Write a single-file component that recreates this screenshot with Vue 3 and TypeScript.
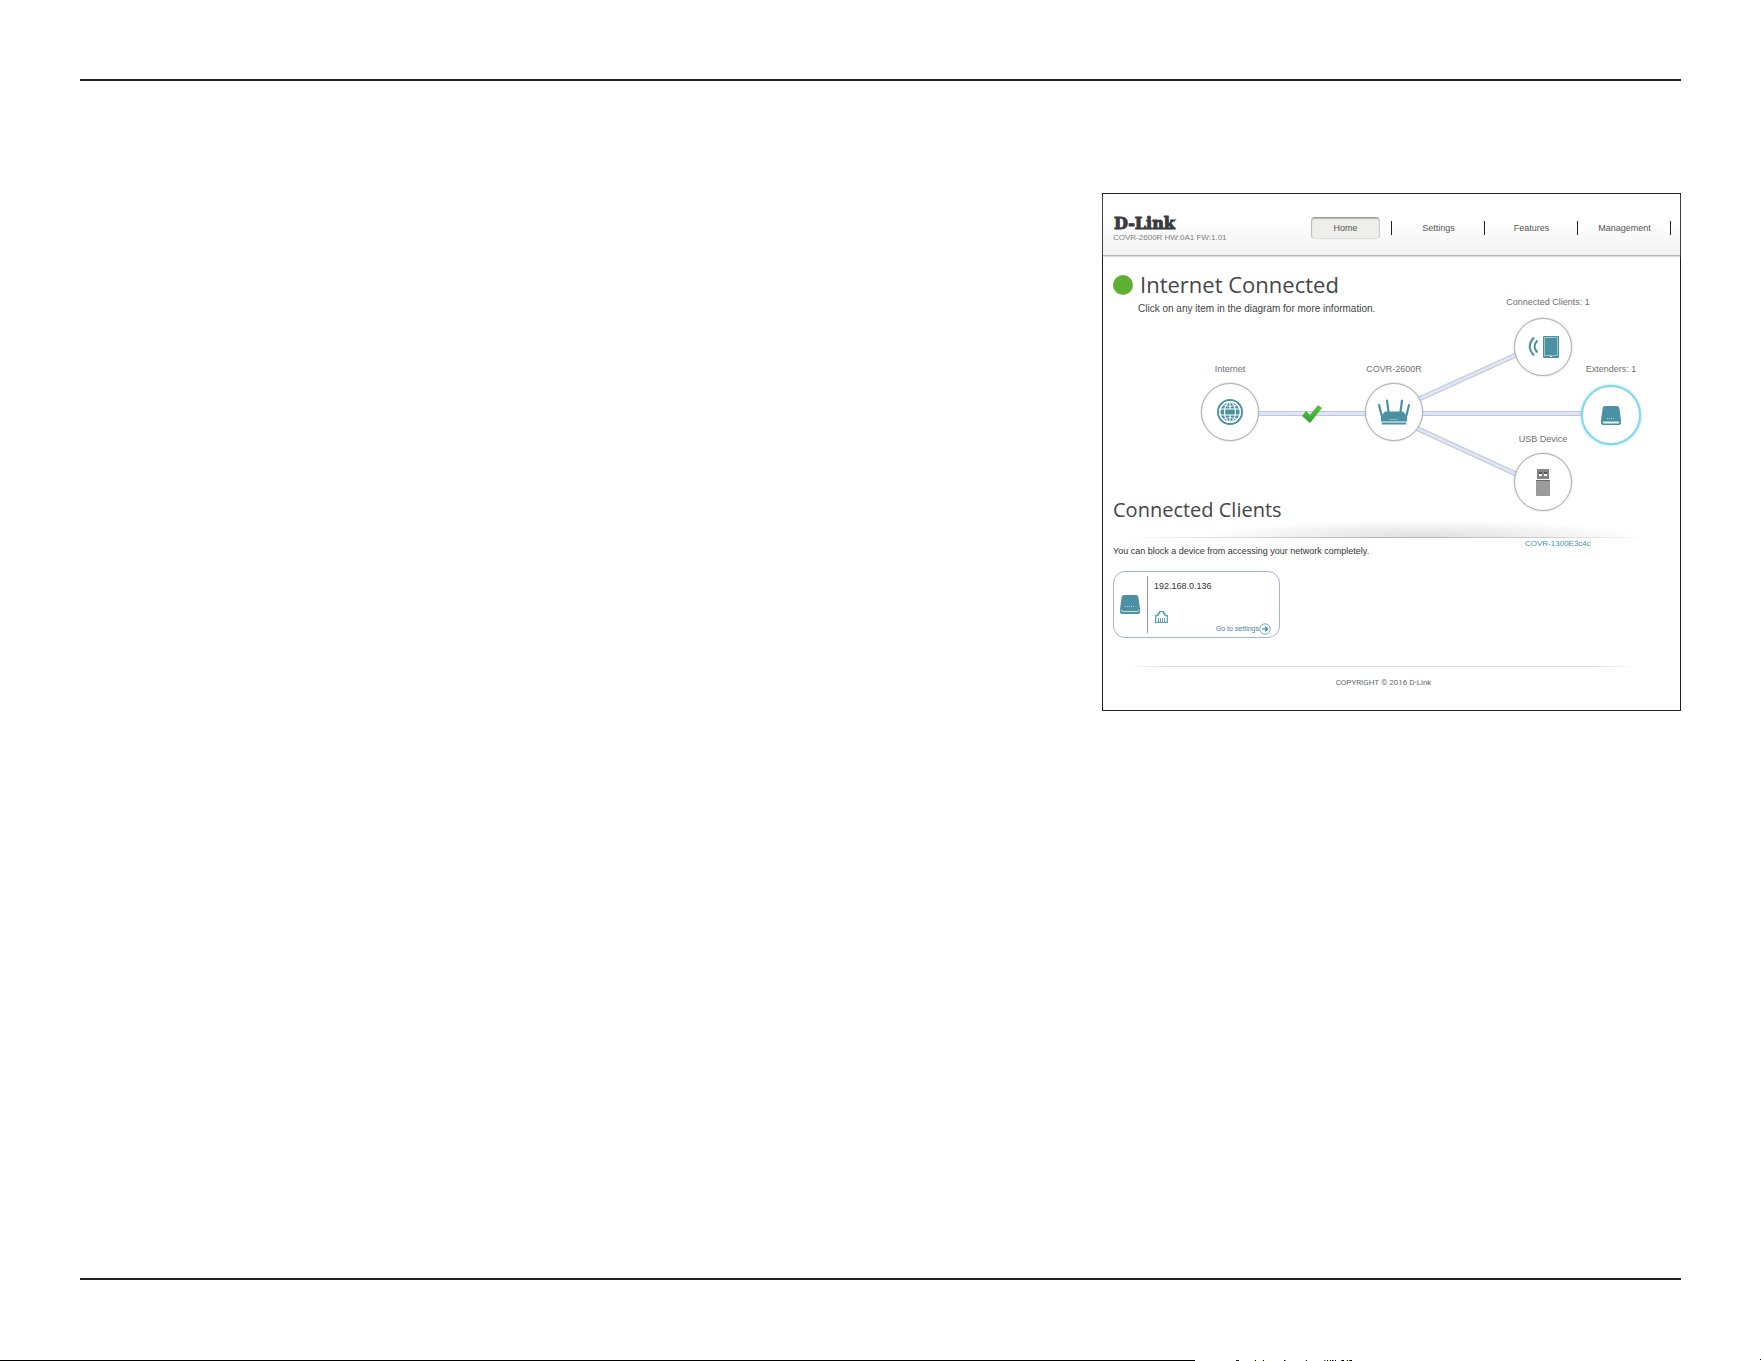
<script setup lang="ts">
import { ref } from 'vue'

type NodeId = 'internet' | 'router' | 'clients' | 'extenders' | 'usb'

interface DiagramNode {
  id: NodeId
  label: string
}

const navItems: string[] = ['Home', 'Settings', 'Features', 'Management']
const activeNav = ref('Home')
const selected = ref<NodeId>('extenders')

const nodes: DiagramNode[] = [
  { id: 'internet', label: 'Internet' },
  { id: 'router', label: 'COVR-2600R' },
  { id: 'clients', label: 'Connected Clients: 1' },
  { id: 'extenders', label: 'Extenders: 1' },
  { id: 'usb', label: 'USB Device' },
]

// x offset and width of each short mark along the bottom edge
const edgeMarks: [number, number, string][] = [
  [41, 3, '#123'], [59, 1, '#ff0'], [60, 1, '#000'], [67, 1, '#ff0'], [68, 1, '#000'],
  [89, 1, '#000'], [90, 1, '#0cc'], [110, 1, '#fe6'], [111, 1, '#00f'],
  [129, 1, '#e20'], [130, 1, '#6cc'], [132, 1, '#000'], [134, 1, '#fe0'], [135, 1, '#00c'],
  [137, 1, '#000'], [138, 1, '#0cc'], [140, 1, '#000'], [146, 1, '#e20'], [147, 2, '#000'],
  [151, 1, '#fe0'], [152, 1, '#000'], [154, 1, '#e20'], [155, 2, '#000'],
]
</script>

<template>
  <div class="page">
    <hr class="page-rule" />
    <main class="page-body">
      <section class="panel">
        <header class="top">
          <div class="brand">
            <span class="logo">D-Link<sup class="reg">'</sup></span>
            <span class="version">COVR-2600R HW:0A1 FW:1.01</span>
          </div>
          <nav class="nav">
            <div v-for="item in navItems" :key="item" class="nav-cell">
              <button
                type="button"
                class="nav-btn"
                :class="{ active: activeNav === item }"
                @click="activeNav = item"
              >{{ item }}</button>
            </div>
          </nav>
        </header>

        <div class="overview">
          <div class="status">
            <span class="dot"></span>
            <div>
              <h1 class="title">Internet Connected</h1>
              <p class="hint">Click on any item in the diagram for more information.</p>
            </div>
          </div>

          <div class="diagram">
            <svg class="links" width="577" height="274" viewBox="0 0 577 274" fill="none">
              <g stroke="#bcc7df" stroke-width="5">
                <path d="M155 157.500H264M319 157.500H480M316 143L413 99M313 172L413 218" />
              </g>
              <g stroke="#e1e6f2" stroke-width="3">
                <path d="M155 157.500H264M319 157.500H480M316 143L413 99M313 172L413 218" />
              </g>
              <defs>
                <linearGradient id="tick" x1="0" y1="0" x2="0" y2="1">
                  <stop offset="0" stop-color="#58c23c" />
                  <stop offset="1" stop-color="#36a036" />
                </linearGradient>
              </defs>
              <path d="M199 160L203 155L207 159L215 149L219 152L207 167Z" fill="url(#tick)" />
            </svg>

            <div v-for="n in nodes" :key="n.id" class="node" :class="n.id">
              <label class="node-label" :for="'node-' + n.id">{{ n.label }}</label>
              <button
                :id="'node-' + n.id"
                type="button"
                class="node-btn"
                :class="{ selected: selected === n.id }"
                @click="selected = n.id"
              >
                <svg v-if="n.id === 'internet'" width="26" height="26" viewBox="0 0 26 26" fill="none" stroke="#4b91a3">
                  <circle cx="13" cy="13" r="12" stroke-width="2" />
                  <circle cx="13" cy="13" r="10" fill="#4b91a3" stroke="none" />
                  <g stroke="#fff" stroke-width="1.200">
                    <circle cx="13" cy="13" r="10.300" />
                    <path d="M3 10H23M3 16H23M13 3V9.500M13 16.500V23" />
                    <path d="M5.500 6Q13 9 20.500 6M5.500 20Q13 17 20.500 20" stroke-width=".8" />
                    <ellipse cx="13" cy="13" rx="5.500" ry="10" />
                  </g>
                </svg>
                <svg v-else-if="n.id === 'router'" width="34" height="26" viewBox="0 0 34 26" fill="#4b91a3">
                  <path d="M2 6L4.500 16M10 1.500L11.500 13M25 1.500L23.500 13M32 6L29.500 16" stroke="#4b91a3" stroke-width="2.200" stroke-linecap="round" />
                  <path d="M8 12.500H26L30 17V22.500H4V17Z" />
                  <path d="M4.500 23.500H29.500L29 25.500H5Z" />
                  <path d="M13 20.500H21" stroke="#b7d4db" stroke-dasharray="1.500 1" />
                </svg>
                <svg v-else-if="n.id === 'clients'" width="32" height="24" viewBox="0 0 32 24" fill="none">
                  <path d="M7 2.500Q-1.500 11.500 7 20.500" stroke="#4b91a3" stroke-width="2" />
                  <path d="M10.500 5.500Q4.500 11.500 10.500 17.500" stroke="#4b91a3" stroke-width="2" />
                  <rect x="16" y="1" width="16" height="22" rx="1" fill="#4b91a3" />
                  <rect x="17.500" y="2.500" width="13" height="18" stroke="#9cc4ce" />
                  <rect x="23" y="21" width="2" height="1" fill="#fff" />
                </svg>
                <svg v-else-if="n.id === 'extenders'" width="20" height="19" viewBox="0 0 20 19" fill="#4b91a3">
                  <path d="M4 0H16Q18 0 18.300 2L20 14H0L1.700 2Q2 0 4 0Z" />
                  <path d="M0 14H20V17Q20 19 18 19H2Q0 19 0 17Z" />
                  <path d="M1.500 15.500H18.500L17.500 17.500H2.500Z" fill="#e4f0f3" />
                  <path d="M6 12.500H14" stroke="#b7d4db" stroke-dasharray="1 1" />
                </svg>
                <svg v-else width="14" height="27" viewBox="0 0 14 27">
                  <path d="M1 0H13V10H1Z" fill="#858585" />
                  <path d="M3 3H6V7H3ZM8 3H11V7H8Z" fill="#fff" />
                  <path d="M3 3H6V5H3ZM8 3H11V5H8Z" fill="#555" />
                  <path d="M0 11H14V26Q14 27 13 27H1Q0 27 0 26Z" fill="#9a9a9a" />
                  <path d="M0 11.500H14" stroke="#696969" />
                </svg>
              </button>
            </div>
            <a href="#" class="extender-name">COVR-1300E3c4c</a>
          </div>
        </div>

        <div class="clients-area">
          <h2 class="subtitle">Connected Clients</h2>
          <div class="shade"></div>
          <p class="note">You can block a device from accessing your network completely.</p>

          <article class="card">
            <div class="card-icon">
              <svg width="20" height="19" viewBox="0 0 20 19" fill="#4b91a3">
                <path d="M4 0H16Q18 0 18.300 2L20 14H0L1.700 2Q2 0 4 0Z" />
                <path d="M0 14H20V17Q20 19 18 19H2Q0 19 0 17Z" />
                <path d="M1 14.500L2 16.500H18L19 14.500" fill="none" stroke="#c3dbe1" />
                <path d="M5 11.500H15" stroke="#b7d4db" stroke-dasharray="1 1" />
              </svg>
            </div>
            <div class="card-body">
              <span class="ip">192.168.0.136</span>
              <svg class="port" width="13" height="12" viewBox="0 0 13 12" fill="none" stroke="#5fa3b2">
                <path d="M.7 11.300V4.500H3V2.500H4.500V.7H8.500V2.500H10V4.500H12.300V11.300Z" stroke-width="1.300" />
                <path d="M3.500 7V11M5.500 7V11M7.500 7V11M9.500 7V11" />
              </svg>
              <a href="#" class="go">
                <span>Go to settings</span>
                <svg width="12" height="12" viewBox="0 0 12 12" fill="none">
                  <circle cx="6" cy="6" r="5.200" stroke="#75b0bf" stroke-width="1" />
                  <path d="M3 6H8.500M6.200 3.800L8.500 6L6.200 8.200" stroke="#347f93" stroke-width="1.200" />
                </svg>
              </a>
            </div>
          </article>
        </div>

        <footer class="foot">
          <div class="foot-rule"></div>
          <p class="copyright">COPYRIGHT © 2016 D-Link</p>
        </footer>
      </section>
    </main>
    <hr class="page-rule" />
    <div class="page-edge">
      <div class="edge-line"></div>
      <svg width="160" height="1" viewBox="0 0 160 1" shape-rendering="crispEdges">
        <rect v-for="(m, i) in edgeMarks" :key="i" :x="m[0]" y="0" :width="m[1]" height="1" :fill="m[2]" />
      </svg>
      <div class="edge-dot"></div>
    </div>
  </div>
</template>

<style>
body {
  margin: 0;
  background: #fff;
}
</style>

<style scoped>
.page {
  box-sizing: border-box;
  min-height: 100vh;
  padding-top: 79px;
  display: flex;
  flex-direction: column;
  font-family: "Liberation Sans", Arial, sans-serif;
  font-size: 9px;
  color: #555;
}
.page-rule {
  box-sizing: border-box;
  flex: none;
  align-self: stretch;
  height: 2px;
  margin: 0 80px;
  border: 0;
  background: #231f20;
}
.page-body {
  flex: 1;
  display: flex;
  justify-content: flex-end;
  align-items: flex-start;
  padding: 112px 80px 40px;
}
.panel {
  box-sizing: border-box;
  width: 100%;
  max-width: 579px;
  border: 1px solid #231f20;
}
.top {
  display: flex;
  justify-content: space-between;
  align-items: flex-start;
  box-sizing: border-box;
  height: 62px;
  padding: 23px 9px 0 10px;
  border-bottom: 1px solid #b4b4b4;
  background: linear-gradient(#fff 45%, #f1f1f1);
  box-shadow: 0 1px 1px #ddd;
}
.brand {
  display: flex;
  flex-direction: column;
}
.logo {
  padding-left: 1px;
  font: bold 16px/14px "DejaVu Serif", serif;
  color: #3a3a3c;
  -webkit-text-stroke: 1px #3a3a3c;
}
.reg {
  font-size: 6px;
  line-height: 0;
  -webkit-text-stroke: 0;
}
.version {
  font-size: 8px;
  line-height: 13px;
  color: #808080;
}
.nav {
  display: flex;
}
.nav-cell {
  position: relative;
  box-sizing: border-box;
  width: 93px;
  padding: 0 12px;
}
.nav-cell::after {
  content: "";
  position: absolute;
  top: 4px;
  right: 0;
  width: 1px;
  height: 14px;
  background: #222;
}
.nav-btn {
  display: block;
  width: 69px;
  height: 22px;
  padding: 0;
  border: 1px solid transparent;
  border-radius: 4px;
  background: none;
  font: 9px/18px "Liberation Sans", Arial, sans-serif;
  color: #555;
}
.nav-btn.active {
  border-color: #999 #ccc #ddd #bbb;
  background: #eeeeec;
  box-shadow: inset 0 1px 1px #b5b5b5;
}
.overview {
  display: grid;
  height: 228px;
}
.overview > * {
  grid-area: 1 / 1;
}
.status {
  display: flex;
  align-items: flex-start;
  gap: 5px;
  padding: 14px 0 0 10px;
}
.dot {
  width: 20px;
  height: 20px;
  margin-top: 5px;
  border-radius: 50%;
  background: #5faf32;
}
.title,
.subtitle {
  margin: 0;
  font-family: "Open Sans", "Noto Sans", sans-serif;
  font-weight: 400;
  color: #454548;
}
.title {
  margin-left: 2px;
  font-size: 22px;
  line-height: 28px;
}
.hint {
  margin: 5px 0 0;
  font-size: 10px;
  line-height: 12px;
  color: #444;
}
.diagram {
  position: relative;
}
.links {
  position: absolute;
  top: 0;
  left: 0;
}
.node {
  position: absolute;
  width: 100px;
  display: flex;
  flex-direction: column;
  align-items: center;
  gap: 8px;
}
.internet { left: 77px; top: 107px; }
.router { left: 241px; top: 107px; }
.clients { left: 390px; top: 40px; gap: 10px; }
.extenders { left: 458px; top: 107px; gap: 10px; }
.usb { left: 390px; top: 177px; }
.clients .node-label {
  padding-left: 10px;
}
.node-label {
  line-height: 12px;
  white-space: nowrap;
  color: #707070;
}
.node-btn {
  display: flex;
  align-items: center;
  justify-content: center;
  box-sizing: border-box;
  width: 58px;
  height: 58px;
  padding: 0;
  border: 1px solid #b0b0b0;
  border-radius: 50%;
  background: #fff;
  box-shadow: 0 0 2px #bbb;
}
.node-btn.selected {
  width: 60px;
  height: 60px;
  border: 2px solid #85d8e8;
  box-shadow: 0 0 3px #85d8e8;
}
.extender-name {
  position: absolute;
  top: 282px;
  left: 422px;
  font-size: 8px;
  line-height: 12px;
  color: #4b91a3;
  text-decoration: none;
}
.clients-area {
  padding: 10px 10px 0;
}
.subtitle {
  font-size: 20px;
  line-height: 32px;
}
.shade {
  height: 17px;
  margin: -6px 24px 0 10px;
  border-bottom: 1px solid;
  border-image: linear-gradient(90deg, transparent, #ccc 30%, #b4b4b4 50%, #ccc 80%, transparent) 1;
  background: radial-gradient(ellipse 42% 100% at 57% 100%, #e0e0e0, #f0f0f0 55%, transparent);
}
.note {
  margin: 6px 0 0;
  font-size: 9px;
  line-height: 14px;
  color: #333;
}
.card {
  display: flex;
  box-sizing: border-box;
  width: 167px;
  height: 67px;
  margin-top: 13px;
  border: 1px solid #9fb6d6;
  border-radius: 12px;
}
.card-icon {
  display: flex;
  align-items: center;
  justify-content: center;
  width: 33px;
  margin: 4px 0;
  border-right: 1px solid #999;
}
.card-icon svg {
  margin-right: 2px;
}
.card-body {
  flex: 1;
  display: flex;
  flex-direction: column;
  align-items: flex-start;
  padding: 8px 8px 0 6px;
}
.ip {
  line-height: 12px;
  color: #333;
}
.port {
  margin: 19px 0 0 1px;
}
.go {
  display: flex;
  align-items: center;
  align-self: flex-end;
  font-size: 7px;
  line-height: 12px;
  color: #4b7f9a;
  text-decoration: none;
}
.foot {
  padding: 28px 10px 21px;
}
.foot-rule {
  height: 1px;
  margin: 0 34px 0 14px;
  background: linear-gradient(90deg, transparent, #ddd 8%, #ddd 92%, transparent);
}
.copyright {
  margin: 10px 16px 0 0;
  font-family: Roboto, sans-serif;
  font-size: 8px;
  line-height: 12px;
  text-align: center;
  color: #6a6a6a;
}
.page-edge {
  display: flex;
  align-items: flex-end;
  height: 81px;
}
.edge-line {
  width: 68%;
  max-width: 1195px;
  height: 1px;
  background: #000;
}
.edge-dot {
  width: 1px;
  height: 1px;
  margin: 0 0 1px auto;
  background: #000;
}
</style>
